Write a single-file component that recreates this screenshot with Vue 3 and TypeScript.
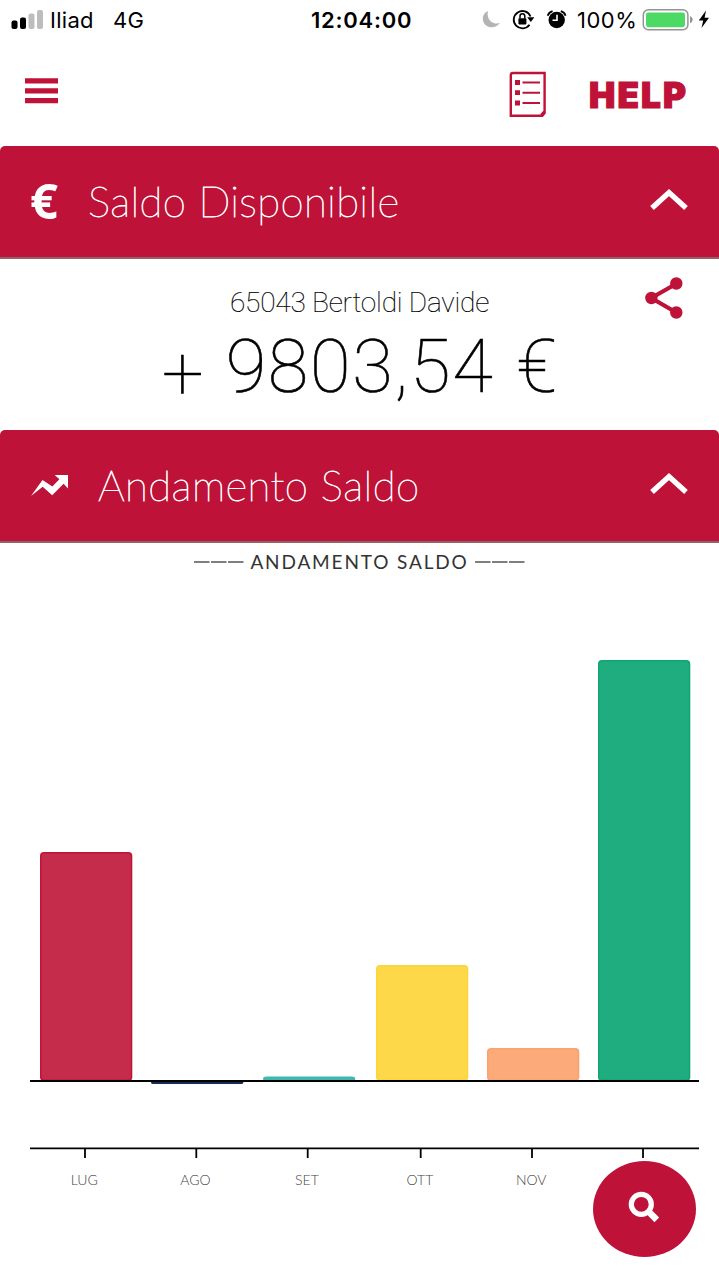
<script setup lang="ts">
interface Bar {
  label: string
  x: number
  y: number
  h: number
  fill: string
  stroke: string
  tick: number
}

const bars: Bar[] = [
  { label: 'LUG', x: 40, y: 852, h: 229, fill: '#c52b4b', stroke: '#be1438', tick: 85 },
  { label: 'AGO', x: 151, y: 1081, h: 3, fill: '#24364f', stroke: '#142c54', tick: 196.3 },
  { label: 'SET', x: 263, y: 1076.6, h: 4.4, fill: '#39b3a6', stroke: '#3fb9ad', tick: 307.7 },
  { label: 'OTT', x: 376, y: 965, h: 116, fill: '#fdd94a', stroke: '#fcd43c', tick: 420.7 },
  { label: 'NOV', x: 487, y: 1048, h: 33, fill: '#fcaa79', stroke: '#fba270', tick: 532 },
  { label: '', x: 598, y: 660, h: 421, fill: '#1fad7f', stroke: '#10a674', tick: 643 },
]
</script>

<template>
  <main class="screen">
    <div class="status">
      <div class="carrier">
        <svg class="signal" width="33" height="20" viewBox="0 0 33 20">
          <rect x="0.5" y="10.5" width="6" height="8.5" rx="2" fill="#000" />
          <rect x="9" y="7.5" width="6" height="11.5" rx="2" fill="#000" />
          <rect x="17.5" y="3.5" width="6" height="15.5" rx="2" fill="#bdbdbd" />
          <rect x="26" y="0" width="6" height="19" rx="2" fill="#bdbdbd" />
        </svg>
        <span class="operator">Iliad</span>
        <span class="network">4G</span>
      </div>
      <span class="clock">12:04:00</span>
      <svg class="glyphs" width="96" height="30" viewBox="478 5 96 30">
        <path d="M488.2 11C484 12.5 482 16.5 483.2 21C485 28 495 30 500 22.8C495 25 490 22 488.4 18C487.4 15.4 487.4 13 488.2 11Z" fill="#b4b4b4" />
        <path d="M530.5 16.5A8.7 8.7 0 1 0 529.5 24.8" fill="none" stroke="#000" stroke-width="1.8" />
        <path d="M527.2 17.2H534.4L530.8 22Z" />
        <rect x="518.4" y="18.2" width="8" height="6.2" rx="0.8" />
        <path d="M520 18.5V16.2A2.4 2.4 0 0 1 524.8 16.2V18.5" fill="none" stroke="#000" stroke-width="1.5" />
        <circle cx="556.7" cy="20" r="8.2" />
        <path d="M557 14.8V20.3H552.5" fill="none" stroke="#fff" stroke-width="1.6" />
        <path d="M547.7 15.8A7 7 0 0 1 552.6 11.2M560.8 11.2A7 7 0 0 1 565.6 15.8" fill="none" stroke="#000" stroke-width="1.8" />
      </svg>
      <span class="percent">100%</span>
      <svg class="battery" width="72" height="26" viewBox="640 7 72 26">
        <rect x="643.3" y="9.8" width="44.6" height="20" rx="5" fill="#fff" stroke="#949494" stroke-width="1.5" />
        <rect x="646" y="12.4" width="39" height="14.8" rx="2.4" fill="#4cd964" />
        <path d="M690 16Q692.7 17 692.7 19.6T690 23.3Z" fill="#949494" />
        <path d="M706 10.5L698.8 20.6H703.2L701.5 28L709 17.7H704.6Z" />
      </svg>
    </div>

    <header class="toolbar">
      <svg class="menu" width="33" height="26" viewBox="0 0 33 26">
        <path d="M0 2.8H33M0 12.8H33M0 22.6H33" stroke="#be1238" stroke-width="5.2" />
      </svg>
      <svg class="notes" width="38" height="47" viewBox="509 71 38 47" fill="none" stroke="#be1238">
        <path d="M513 73H544.6V113L542.3 115.8H510.8V75.2Q510.8 73 513 73Z" stroke-width="2.4" />
        <path d="M522.5 82.5H540M522.5 92.7H540M522.5 103H540" stroke-width="2" />
        <path d="M515 82.5H520M515 92.7H520M515 103H520" stroke-width="4.8" />
        <path d="M544 111.5L541 115" stroke-width="2" />
      </svg>
      <span class="help">HELP</span>
    </header>

    <section class="bar-title first">
      <span class="euro">€</span>
      <h2 class="title-balance">Saldo Disponibile</h2>
      <svg class="chevron" width="38" height="24" viewBox="0 0 38 24"><path d="M2 21L19 5.6L36 21" fill="none" stroke="#fff" stroke-width="5.4" /></svg>
    </section>

    <section class="balance">
      <div class="owner">65043 Bertoldi Davide</div>
      <div class="amount"><span class="plus">+</span><span class="value">9803,54</span><span>€</span></div>
      <svg class="share" width="40" height="44" viewBox="644 276 40 44">
        <path d="M676.3 283.7L651.3 298L676.3 312.5" fill="none" stroke="#be1238" stroke-width="4.2" />
        <g fill="#be1238"><circle cx="676.3" cy="283.5" r="6.2" /><circle cx="651.4" cy="298" r="6.2" /><circle cx="676.3" cy="312.5" r="6.2" /></g>
      </svg>
    </section>

    <section class="bar-title">
      <svg class="trend" width="40" height="24" viewBox="30 472 40 24">
        <path d="M31 495L42.5 479L52.3 485.5L59.4 478.2L54.7 474H68V487.5L63.6 482.8L52.2 494.2L42.7 485.8Z" fill="#fff" />
      </svg>
      <h2 class="title-trend">Andamento Saldo</h2>
      <svg class="chevron" width="38" height="24" viewBox="0 0 38 24"><path d="M2 21L19 5.6L36 21" fill="none" stroke="#fff" stroke-width="5.4" /></svg>
    </section>

    <section class="chart">
      <h3 class="caption">
        <svg width="50" height="4" viewBox="0 0 50 4"><path d="M0 2H15.5M17 2H32.5M34 2H49.5" stroke="#555" stroke-width="1.3" /></svg>
        <span>ANDAMENTO SALDO</span>
        <svg width="50" height="4" viewBox="0 0 50 4"><path d="M0 2H15.5M17 2H32.5M34 2H49.5" stroke="#555" stroke-width="1.3" /></svg>
      </h3>
      <svg class="plot" width="719" height="620" viewBox="0 580 719 620">
        <g v-for="b in bars" :key="b.x">
          <rect :x="b.x" :y="b.y" width="92.3" :height="b.h" :rx="Math.min(4, b.h)" :fill="b.stroke" />
          <rect v-if="b.h > 5" :x="b.x + 1.5" :y="b.y + 1.5" width="89.3" :height="b.h - 3" rx="3" :fill="b.fill" />
          <path :d="`M${b.tick} 1148V1158`" stroke="#000" stroke-width="1.8" />
          <text :x="b.tick - 0.8" y="1185" text-anchor="middle">{{ b.label }}</text>
        </g>
        <path d="M30 1081H699M30 1148.4H699" stroke="#000" stroke-width="1.8" />
      </svg>
    </section>

    <button class="search" aria-label="Cerca">
      <svg width="32" height="32" viewBox="0 0 32 32" fill="none" stroke="#fff">
        <circle cx="13.3" cy="13.3" r="10" stroke-width="5.2" />
        <path d="M20 20L28.8 28.8" stroke-width="6.6" />
      </svg>
    </button>
  </main>
</template>

<style>
body { margin: 0; background: #fff; }
</style>

<style scoped>
* { box-sizing: border-box; }
.screen { position: relative; width: 719px; height: 1280px; overflow: hidden; background: #fff; color: #000; font-family: Lato, sans-serif; }
.status { display: flex; align-items: center; height: 40px; font: 400 22px/40px Inter, sans-serif; white-space: nowrap; }
.status svg { flex: none; }
.carrier { display: flex; align-items: center; width: 311px; padding-left: 11px; }
.operator { width: 63px; margin-left: 6px; letter-spacing: 0.3px; }
.network { letter-spacing: 0.4px; }
.clock { width: 167px; font-weight: 600; letter-spacing: 0.75px; }
.percent { width: 62px; margin-left: 3px; letter-spacing: 0.5px; }
.battery { margin-left: 1px; }
.toolbar { display: flex; align-items: flex-start; height: 106px; padding: 31px 0 0 25px; }
.menu { margin-top: 7px; }
.notes { margin-left: 451px; }
.help { margin: 2px 0 0 42px; color: #be1238; font: 900 35px/44px Inter, sans-serif; letter-spacing: 2.2px; -webkit-text-stroke: 1.2px #be1238; }
.bar-title { display: flex; align-items: center; height: 113px; padding: 0 31px 1px 30px; border-bottom: 2px solid #94616b; border-radius: 5px 5px 0 0; background: #be1238; background-clip: padding-box; color: #fff; }
.bar-title h2 { flex: 1; margin: 0; font-size: 42px; font-weight: 200; line-height: 60px; white-space: nowrap; -webkit-text-stroke: 0.8px #fff; }
.euro { width: 58px; font: 700 49px/58px "Open Sans", sans-serif; margin-top: -2px; }
.title-balance { letter-spacing: 0.35px; }
.title-trend { letter-spacing: 0.45px; }
.trend { margin-right: 28px; }
.chevron { margin-top: -4px; }
.balance { position: relative; height: 171px; text-align: center; font-family: Roboto, sans-serif; font-weight: 100; white-space: nowrap; }
.owner { padding-top: 24px; font-size: 28px; line-height: 40px; letter-spacing: -0.2px; -webkit-text-stroke: 0.2px #000; }
.amount { display: flex; justify-content: center; padding-top: 1px; font-size: 74px; line-height: 86px; -webkit-text-stroke: 0.6px #000; }
.value { margin: 0 22px; letter-spacing: 1.7px; }
.plus { padding-top: 7px; }
.share { position: absolute; top: 17px; right: 35px; }
.chart { height: 657px; }
.caption { display: flex; align-items: center; justify-content: center; gap: 6.5px; height: 37px; margin: 0; font-size: 19px; font-weight: 400; letter-spacing: 1.85px; color: #333; }
.plot { display: block; }
.plot text { font: 300 14px Lato, sans-serif; fill: #444; }
.search { position: absolute; left: 593px; top: 1161px; display: flex; align-items: center; justify-content: center; width: 103px; height: 96px; padding: 0 2px 4px 0; border: 0; border-radius: 50%; background: #be1238; }
</style>
